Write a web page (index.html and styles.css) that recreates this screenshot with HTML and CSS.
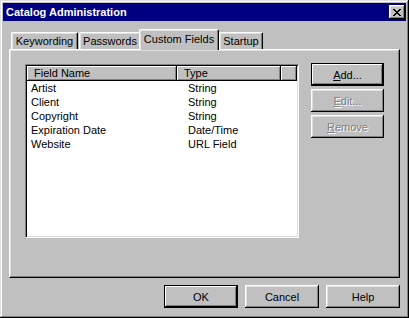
FILE: index.html
```html
<!DOCTYPE html>
<html>
<head>
    <link rel="stylesheet" href="styles.css">
</head>
<body>
    <div class="window">
        <div class="titlebar">
            <span class="title">Catalog Administration</span>
            <button type="button" class="close-button">
                <svg width="8" height="7" viewBox="0 0 8 7">
                    <path d="M0 0h2v1h1v1h2v-1h1v-1h2v1h-1v1h-1v1h-1v1h1v1h1v1h1v1h-2v-1h-1v-1h-2v1h-1v1h-2v-1h1v-1h1v-1h1v-1h-1v-1h-1v-1h-1z" fill="#000"/>
                </svg>
            </button>
        </div>
        <div class="dialog-body">
            <div class="tabs">
                <div class="tab tab-keywording">Keywording</div>
                <div class="tab tab-passwords">Passwords</div>
                <div class="tab tab-custom selected">Custom Fields</div>
                <div class="tab tab-startup">Startup</div>
            </div>
            <div class="panel">
                <div class="listview">
                    <div class="list-header">
                        <div class="col-head col-name">Field Name</div>
                        <div class="col-head col-type">Type</div>
                        <div class="col-head col-fill"></div>
                    </div>
                    <div class="list-row"><span class="cell-name">Artist</span><span class="cell-type">String</span></div>
                    <div class="list-row"><span class="cell-name">Client</span><span class="cell-type">String</span></div>
                    <div class="list-row"><span class="cell-name">Copyright</span><span class="cell-type">String</span></div>
                    <div class="list-row"><span class="cell-name">Expiration Date</span><span class="cell-type">Date/Time</span></div>
                    <div class="list-row"><span class="cell-name">Website</span><span class="cell-type">URL Field</span></div>
                </div>
                <div class="side-buttons">
                    <button type="button" class="btn default"><u>A</u>dd...</button>
                    <button type="button" class="btn" disabled><u>E</u>dit...</button>
                    <button type="button" class="btn" disabled><u>R</u>emove</button>
                </div>
            </div>
            <div class="footer">
                <button type="button" class="btn default">OK</button>
                <button type="button" class="btn">Cancel</button>
                <button type="button" class="btn">Help</button>
            </div>
        </div>
    </div>
</body>
</html>
```

FILE: styles.css
```css
body {
    margin: 0;
    font-family: "Liberation Sans", Arial, sans-serif;
    font-size: 11px;
    background: #c0c0c0;
}

.window {
    width: 409px;
    height: 318px;
    box-sizing: border-box;
    padding: 3px;
    background: #c0c0c0;
    box-shadow: inset -1px -1px #000, inset 1px 1px #dfdfdf, inset -2px -2px #808080, inset 2px 2px #fff;
}

.titlebar {
    height: 18px;
    background: #000080;
    color: #fff;
    display: flex;
    align-items: center;
    justify-content: space-between;
    padding: 0 1px 0 3px;
}

.title {
    font-weight: bold;
    font-size: 11px;
}

.close-button {
    width: 16px;
    height: 14px;
    padding: 0;
    border: none;
    background: #c0c0c0;
    display: flex;
    align-items: center;
    justify-content: center;
    box-shadow: inset -1px -1px #000, inset 1px 1px #fff, inset -2px -2px #808080, inset 2px 2px #dfdfdf;
}

.dialog-body {
    padding: 8px 6px 0 6px;
}

.tabs {
    display: flex;
    height: 20px;
    padding-left: 2px;
    position: relative;
    z-index: 1;
}

.tab {
    height: 17px;
    margin-top: 3px;
    box-sizing: border-box;
    padding-top: 2px;
    text-align: center;
    white-space: nowrap;
    border-top: 1px solid #fff;
    border-left: 1px solid #fff;
    border-right: 1px solid #000;
    border-radius: 2px 2px 0 0;
    box-shadow: inset -1px 0 #808080, inset 1px 1px #dfdfdf;
    background: #c0c0c0;
    color: #000;
    margin-right: 1px;
}

.tab-keywording {
    width: 67px;
}

.tab-passwords {
    width: 62px;
}

.tab-custom {
    width: 80px;
}

.tab-startup {
    width: 44px;
}

.tab.selected {
    height: 21px;
    margin-top: 0;
    margin-left: -3px;
    margin-right: 0;
    padding-top: 3px;
}

.panel {
    height: 229px;
    box-sizing: border-box;
    display: flex;
    padding: 14px 0 0 15px;
    border-top: 1px solid #fff;
    border-left: 1px solid #fff;
    border-right: 1px solid #000;
    border-bottom: 1px solid #000;
    box-shadow: inset -1px -1px #808080, inset 1px 1px #dfdfdf;
}

.listview {
    width: 274px;
    height: 174px;
    box-sizing: border-box;
    background: #fff;
    border-top: 1px solid #808080;
    border-left: 1px solid #808080;
    border-right: 1px solid #fff;
    border-bottom: 1px solid #fff;
    box-shadow: inset 1px 1px #000, inset -1px -1px #dfdfdf;
    padding: 1px;
}

.list-header {
    display: flex;
    height: 15px;
}

.col-head {
    box-sizing: border-box;
    height: 15px;
    background: #c0c0c0;
    padding: 1px 0 0 7px;
    box-shadow: inset -1px -1px #000, inset 1px 1px #fff, inset -2px -2px #808080;
}

.col-name {
    width: 150px;
}

.col-type {
    width: 104px;
}

.col-fill {
    flex: 1;
}

.list-row {
    display: flex;
    height: 14px;
    line-height: 14px;
}

.list-row:first-of-type {
    margin-top: 1px;
}

.cell-name {
    width: 155px;
    padding-left: 4px;
}

.cell-type {
    padding-left: 2px;
}

.side-buttons {
    display: flex;
    flex-direction: column;
    gap: 3px;
    margin-left: 12px;
    margin-top: -1px;
}

.btn {
    width: 73px;
    height: 23px;
    padding: 0;
    border: none;
    background: #c0c0c0;
    font-family: "Liberation Sans", Arial, sans-serif;
    font-size: 11px;
    color: #000;
    box-shadow: inset -1px -1px #000, inset 1px 1px #fff, inset -2px -2px #808080, inset 2px 2px #dfdfdf;
}

.btn.default {
    box-shadow: inset 0 0 0 1px #000, inset -2px -2px #000, inset 2px 2px #fff, inset -3px -3px #808080;
}

.btn:disabled {
    color: #808080;
    text-shadow: 1px 1px #fff;
}

.footer {
    display: flex;
    justify-content: flex-end;
    gap: 7px;
    margin-top: 7px;
}

.footer .btn {
    width: 74px;
}
```
